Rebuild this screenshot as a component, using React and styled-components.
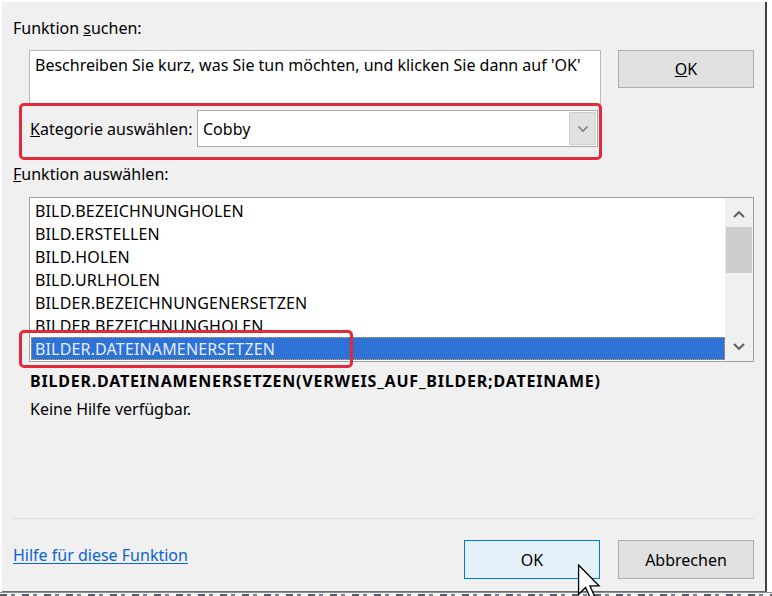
import React from 'react';
import styled, { createGlobalStyle } from 'styled-components';

const Global = createGlobalStyle`
  html, body { margin: 0; padding: 0; background: #ffffff; }
  body {
    width: 772px; height: 596px; overflow: hidden;
    font-family: "Noto Sans", "Open Sans", sans-serif;
    -webkit-font-smoothing: antialiased;
  }
  * { box-sizing: border-box; }
`;

const Screen = styled.div`
  position: relative;
  width: 772px;
  height: 596px;
  overflow: hidden;
  background: #ffffff;
  display: flex;
  flex-direction: column;
`;

const Dialog = styled.div`
  margin: 2px 0 0 2px;
  width: 765px;
  height: 590px;
  background: #f0f0f0;
  border-right: 2px solid #3a4350;
  border-bottom: 1px solid #6b6f75;
  padding: 16px 11px 0 11px;
  display: flex;
  flex-direction: column;
  color: #000;
  font-size: 16px;
  line-height: 20px;
`;

const Label = styled.div`
  height: 20px;
  white-space: nowrap;
  margin-top: ${p => p.$mt || 0}px;
  padding-left: ${p => p.$pl || 0}px;
  font-weight: ${p => (p.$bold ? 700 : 400)};
  letter-spacing: ${p => (p.$bold ? '0.8px' : 'normal')};
  color: #000;
`;

const SearchRow = styled.div`
  display: flex;
  align-items: flex-start;
  gap: 17px;
  margin-top: 12px;
  padding-left: 16px;
`;

const SearchBox = styled.div`
  width: 572px;
  height: 55px;
  background: #fff;
  border: 1px solid #b9b9b9;
  padding: 4px 5px;
  white-space: nowrap;
  color: #000;
`;

const Button = styled.div`
  width: 136px;
  height: ${p => p.$h || 38}px;
  display: flex;
  align-items: center;
  justify-content: center;
  background: ${p => (p.$primary ? '#e5f1fb' : '#e1e1e1')};
  border: 1px solid ${p => (p.$primary ? '#0078d7' : '#adadad')};
  color: #000;
  font-size: 16px;
`;

const CategoryRow = styled.div`
  position: relative;
  width: 585px;
  margin-top: 5px;
  display: flex;
  align-items: center;
  padding-left: 17px;
`;

const CategoryLabel = styled.div`
  flex: 1;
  white-space: nowrap;
`;

const Select = styled.div`
  width: 401px;
  height: 37px;
  background: #fff;
  border: 1px solid #a9a9a9;
  display: flex;
  align-items: center;
  padding: 1px;
`;

const SelectValue = styled.div`
  flex: 1;
  padding-left: 4px;
`;

const DropButton = styled.div`
  width: 27px;
  height: 100%;
  background: #e1e1e1;
  border: 1px solid #cfcfcf;
  display: flex;
  align-items: center;
  justify-content: center;
`;

const Highlight = styled.div`
  position: absolute;
  left: ${p => p.$l}px;
  top: ${p => p.$t}px;
  width: ${p => p.$w}px;
  height: ${p => p.$h}px;
  border: 3px solid #e5293c;
  border-radius: 5px;
  pointer-events: none;
`;

const ListWrap = styled.div`
  position: relative;
  margin-top: 13px;
  margin-left: 16px;
  width: 725px;
  height: 165px;
  background: #fff;
  border: 1px solid #a0a0a0;
  display: flex;
`;

const Items = styled.div`
  flex: 1;
  padding: 1px 0 0 1px;
  overflow: hidden;
`;

const Item = styled.div`
  height: 23px;
  padding-top: 2px;
  line-height: 21px;
  padding-left: 4px;
  white-space: nowrap;
  letter-spacing: 0.15px;
  color: ${p => (p.$selected ? '#e4eeff' : '#000')};
  background: ${p => (p.$selected ? '#2f72d5' : 'transparent')};
  outline: ${p => (p.$selected ? '1px dotted #d9a24a' : 'none')};
  outline-offset: -1px;
`;

const Scrollbar = styled.div`
  width: 28px;
  background: #f0f0f0;
  display: flex;
  flex-direction: column;
  align-items: stretch;
`;

const ScrollArrow = styled.div`
  height: 29px;
  display: flex;
  align-items: center;
  justify-content: center;
  padding-top: ${p => p.$pt || 0}px;
`;

const Thumb = styled.div`
  height: 46px;
  margin: 0 1px 0 1px;
  background: #cdcdcd;
`;

const Track = styled.div`
  flex: 1;
`;

const Separator = styled.div`
  margin-top: 99px;
  height: 1px;
  background: #dadada;
`;

const Footer = styled.div`
  margin-top: 21px;
  display: flex;
  align-items: flex-start;
  gap: 18px;
`;

const HelpLink = styled.a`
  flex: 1;
  margin-top: 5px;
  color: #0a64d2;
  text-decoration: underline;
  text-underline-offset: 2px;
  white-space: nowrap;
`;

const BelowStrip = styled.div`
  flex: 1;
  background:
    repeating-linear-gradient(90deg, #5a606a 0 7px, transparent 7px 11px, #7a808a 11px 15px, transparent 15px 22px) 0 1px / 100% 3px no-repeat,
    #f4f4f4;
  border-top: 1px solid #8a8e94;
  filter: blur(0.4px);
`;

const Cursor = styled.svg`
  position: absolute;
  left: 577px;
  top: 564px;
`;

const ChevronDown = ({ w = 10, h = 6, sw = 1.2, color = '#6b6b6b' }) => (
  <svg width={w} height={h} viewBox={`0 0 ${w} ${h}`}>
    <polyline points={`0.5,0.5 ${w / 2},${h - 0.8} ${w - 0.5},0.5`} fill="none" stroke={color} strokeWidth={sw} />
  </svg>
);

const ChevronUp = ({ w = 12, h = 7, sw = 2, color = '#606060' }) => (
  <svg width={w} height={h} viewBox={`0 0 ${w} ${h}`}>
    <polyline points={`1,${h - 1} ${w / 2},1.2 ${w - 1},${h - 1}`} fill="none" stroke={color} strokeWidth={sw} />
  </svg>
);

const items = [
  'BILD.BEZEICHNUNGHOLEN',
  'BILD.ERSTELLEN',
  'BILD.HOLEN',
  'BILD.URLHOLEN',
  'BILDER.BEZEICHNUNGENERSETZEN',
  'BILDER.BEZEICHNUNGHOLEN',
  'BILDER.DATEINAMENERSETZEN',
];

export default function App() {
  return (
    <Screen>
      <Global />
      <Dialog>
        <Label>Funktion <u>s</u>uchen:</Label>
        <SearchRow>
          <SearchBox>Beschreiben Sie kurz, was Sie tun möchten, und klicken Sie dann auf 'OK'</SearchBox>
          <Button><span><u>O</u>K</span></Button>
        </SearchRow>
        <CategoryRow>
          <CategoryLabel><u>K</u>ategorie auswählen:</CategoryLabel>
          <Select>
            <SelectValue>Cobby</SelectValue>
            <DropButton><ChevronDown /></DropButton>
          </Select>
          <Highlight $l={6} $t={-7} $w={583} $h={57} />
        </CategoryRow>
        <Label $mt={17}><u>F</u>unktion auswählen:</Label>
        <ListWrap>
          <Items>
            {items.map((it, i) => (
              <Item key={it} $selected={i === items.length - 1}>{it}</Item>
            ))}
          </Items>
          <Scrollbar>
            <ScrollArrow $pt={4}><ChevronUp /></ScrollArrow>
            <Thumb />
            <Track />
            <ScrollArrow $pt={0}>
              <svg width="12" height="7" viewBox="0 0 12 7">
                <polyline points="1,1 6,5.8 11,1" fill="none" stroke="#606060" strokeWidth="2" />
              </svg>
            </ScrollArrow>
          </Scrollbar>
          <Highlight $l={-11} $t={132} $w={334} $h={38} />
        </ListWrap>
        <Label $mt={9} $pl={17} $bold>BILDER.DATEINAMENERSETZEN(VERWEIS_AUF_BILDER;DATEINAME)</Label>
        <Label $mt={8} $pl={17}>Keine Hilfe verfügbar.</Label>
        <Separator />
        <Footer>
          <HelpLink>Hilfe für diese Funktion</HelpLink>
          <Button $primary $h={39}>OK</Button>
          <Button $h={39}>Abbrechen</Button>
        </Footer>
      </Dialog>
      <BelowStrip />
      <Cursor width="24" height="36" viewBox="0 0 12 19">
        <polygon points="0.5,0.5 0.5,16 4.2,12.4 6.8,18.2 9,17.2 6.5,11.5 11.3,11.5" fill="#fff" stroke="#000" strokeWidth="0.7" strokeLinejoin="miter" />
      </Cursor>
    </Screen>
  );
}
